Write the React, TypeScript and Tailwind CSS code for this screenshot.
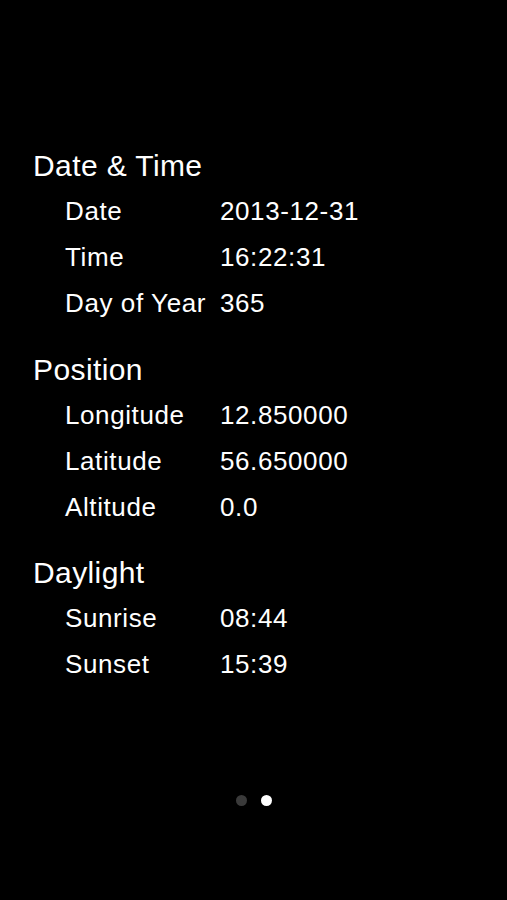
const sections = [
  {
    title: "Date & Time",
    rows: [
      ["Date", "2013-12-31"],
      ["Time", "16:22:31"],
      ["Day of Year", "365"],
    ],
  },
  {
    title: "Position",
    rows: [
      ["Longitude", "12.850000"],
      ["Latitude", "56.650000"],
      ["Altitude", "0.0"],
    ],
  },
  {
    title: "Daylight",
    rows: [
      ["Sunrise", "08:44"],
      ["Sunset", "15:39"],
    ],
  },
];

const App = () => {
  return (
    <div
      className="flex h-[900px] w-full flex-col bg-black text-white"
      style={{ fontFamily: '"Liberation Sans", Arial, sans-serif' }}
    >
      <div className="flex flex-col gap-[21.5px] pl-[33px] pt-[144px]">
        {sections.map((section) => (
          <div key={section.title}>
            <h2 className="text-[30px] leading-[44px] font-normal tracking-[0.4px]">{section.title}</h2>
            {section.rows.map(([label, value]) => (
              <div key={label} className="flex pl-[32px] text-[26px] leading-[46px] tracking-[0.6px]">
                <span className="w-[155px]">{label}</span>
                <span>{value}</span>
              </div>
            ))}
          </div>
        ))}
      </div>

      <div className="mt-auto flex justify-center gap-[14px] pb-[94px]">
        <span className="h-[11px] w-[11px] rounded-full bg-[#3a3a3a]" />
        <span className="h-[11px] w-[11px] rounded-full bg-white" />
      </div>
    </div>
  );
};

export default App;
